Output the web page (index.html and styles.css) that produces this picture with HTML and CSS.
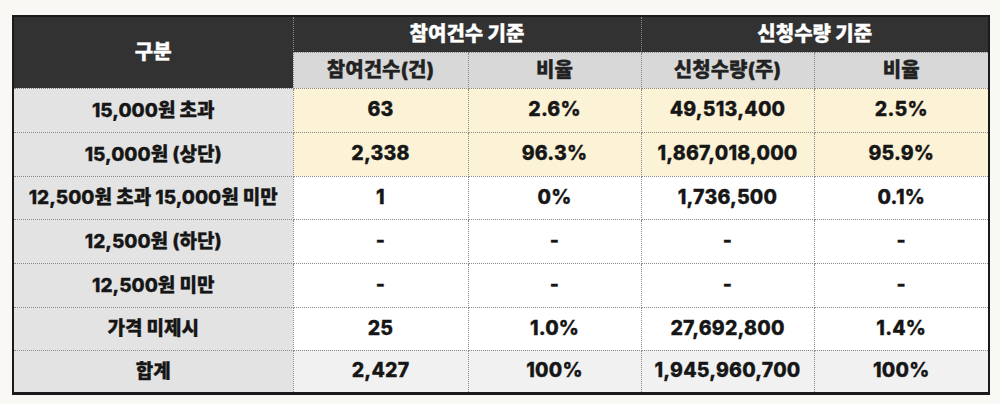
FILE: index.html
```html
<!DOCTYPE html>
<html lang="ko">
<head>
<meta charset="utf-8">
<link rel="stylesheet" href="styles.css">
</head>
<body>
<table class="stats">
  <colgroup>
    <col class="c0"><col class="c1"><col class="c2"><col class="c3"><col class="c4">
  </colgroup>
  <thead>
    <tr class="h1">
      <th rowspan="2" class="dark">구분</th>
      <th colspan="2" class="dark">참여건수 기준</th>
      <th colspan="2" class="dark">신청수량 기준</th>
    </tr>
    <tr class="h2">
      <th class="sub">참여건수(건)</th>
      <th class="sub">비율</th>
      <th class="sub">신청수량(주)</th>
      <th class="sub">비율</th>
    </tr>
  </thead>
  <tbody>
    <tr class="yellow r44">
      <th>15,000원 초과</th><td>63</td><td>2.6%</td><td>49,513,400</td><td>2.5%</td>
    </tr>
    <tr class="yellow r44">
      <th>15,000원 (상단)</th><td>2,338</td><td>96.3%</td><td>1,867,018,000</td><td>95.9%</td>
    </tr>
    <tr class="r43">
      <th>12,500원 초과 15,000원 미만</th><td>1</td><td>0%</td><td>1,736,500</td><td>0.1%</td>
    </tr>
    <tr class="r44">
      <th>12,500원 (하단)</th><td>-</td><td>-</td><td>-</td><td>-</td>
    </tr>
    <tr class="r44">
      <th>12,500원 미만</th><td>-</td><td>-</td><td>-</td><td>-</td>
    </tr>
    <tr class="r43">
      <th>가격 미제시</th><td>25</td><td>1.0%</td><td>27,692,800</td><td>1.4%</td>
    </tr>
    <tr class="total r43">
      <th>합계</th><td>2,427</td><td>100%</td><td>1,945,960,700</td><td>100%</td>
    </tr>
  </tbody>
</table>
</body>
</html>
```

FILE: styles.css
```css
html, body {
  margin: 0;
  padding: 0;
  background: #f9f8f4;
}
body {
  padding: 15px 12px 0 12px;
  font-family: "Inter", "Noto Sans CJK KR", "Noto Sans", sans-serif;
  font-weight: 800;
  color: #161616;
}
.stats {
  border-collapse: collapse;
  table-layout: fixed;
  width: 976px;
  border: 2px solid #1a1a1a;
  border-bottom-width: 3px;
}
.c0 { width: 280px; }
.c1 { width: 175px; }
.c2 { width: 173px; }
.c3 { width: 173px; }
.c4 { width: 175px; }
.stats th, .stats td {
  padding: 0;
  text-align: center;
  vertical-align: middle;
  font-weight: 800;
  border: 1px dotted #8a8a8a;
  line-height: 1;
  -webkit-text-stroke: 0.3px currentColor;
}
.stats th {
  font-size: 19px;
  letter-spacing: 0;
}
.stats td {
  font-size: 19.5px;
  letter-spacing: 0.2px;
}
.h1, .h2 { height: 36px; }
.r44 { height: 44px; }
.r43 { height: 43px; }
.stats .dark {
  background: #323232;
  color: #ffffff;
  font-size: 20px;
}
.stats .sub {
  background: #d8d8d8;
  color: #222222;
  font-size: 20px;
}
tbody th {
  background: #e3e3e3;
}
tbody td {
  background: #ffffff;
}
.yellow td {
  background: #fcf2d6;
}
.total td {
  background: #f1f1f1;
}
```
